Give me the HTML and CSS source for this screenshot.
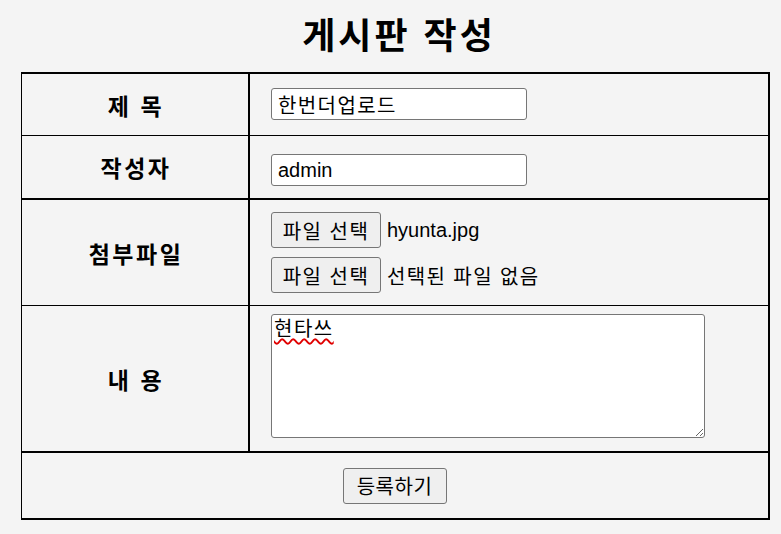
FILE: index.html
```html
<!DOCTYPE html>
<html lang="ko">
<head>
    <meta charset="UTF-8">
    <meta name="viewport" content="width=device-width, initial-scale=1.0">
    <title>게시판 작성</title>
    <link rel="stylesheet" href="styles.css">
</head>
<body>

    <h1 class="title">게시판 작성</h1>

    <form class="board-form" onsubmit="return false;">
        <div class="cell label row1">제 목</div>
        <div class="cell value row1">
            <input type="text" class="text-input ko" value="한번더업로드">
        </div>

        <div class="cell label row2">작성자</div>
        <div class="cell value row2">
            <input type="text" class="text-input" value="admin">
        </div>

        <div class="cell label row3">첨부파일</div>
        <div class="cell value row3 files">
            <div class="file-line">
                <button type="button" class="btn file-btn">파일 선택</button>
                <span class="file-name">hyunta.jpg</span>
            </div>
            <div class="file-line">
                <button type="button" class="btn file-btn">파일 선택</button>
                <span class="file-name ko">선택된 파일 없음</span>
            </div>
        </div>

        <div class="cell label row4">내 용</div>
        <div class="cell value row4">
            <div class="content-box" contenteditable="true"><span class="typo">현타쓰</span></div>
        </div>

        <div class="cell submit-row">
            <button type="submit" class="btn submit-btn">등록하기</button>
        </div>
    </form>

</body>
</html>
```

FILE: styles.css
```css
body {
    margin: 0;
    background-color: #f4f4f4;
    font-family: "Liberation Sans", "Noto Sans CJK KR", sans-serif;
    color: #000;
}

.title {
    margin: 11px 0 17px;
    padding-left: 17px;
    font-family: "Noto Sans CJK KR", sans-serif;
    font-size: 36px;
    font-weight: bold;
    line-height: 44px;
    letter-spacing: 3px;
    text-align: center;
}

.board-form {
    display: grid;
    grid-template-columns: 228px 518px;
    grid-template-rows: 62px 64px 106px 147px 65px;
    width: 749px;
    margin-left: 21px;
    box-sizing: border-box;
    border-top: 2px solid #000;
    border-left: 1px solid #000;
    border-right: 2px solid #000;
    border-bottom: 2px solid #000;
}

.cell {
    box-sizing: border-box;
}

.label {
    display: flex;
    align-items: center;
    justify-content: center;
    border-right: 2px solid #000;
    font-family: "Noto Sans CJK KR", sans-serif;
    font-size: 23px;
    font-weight: bold;
    letter-spacing: 2.5px;
    padding-left: 2px;
}

.value {
    padding-left: 21px;
}

.row1 {
    border-bottom: 1px solid #000;
}

.row1.value {
    padding-top: 14px;
}

.row2 {
    border-bottom: 2px solid #000;
}

.row2.value {
    padding-top: 18px;
}

.row3 {
    border-bottom: 1px solid #000;
}

.row4 {
    border-bottom: 2px solid #000;
}

.row4.value {
    padding-top: 8px;
}

.text-input {
    display: block;
    box-sizing: border-box;
    width: 256px;
    height: 32px;
    margin: 0;
    padding: 0 6px;
    border: 1px solid #767676;
    border-radius: 3px;
    background-color: #fff;
    font-family: "Liberation Sans", "Noto Sans CJK KR", sans-serif;
    font-size: 20px;
    color: #000;
}

.ko {
    letter-spacing: 1.4px;
}

.files {
    display: flex;
    flex-direction: column;
    gap: 9px;
    padding-top: 12px;
}

.file-line {
    display: flex;
    align-items: center;
    gap: 6px;
    font-size: 20px;
}

.btn {
    box-sizing: border-box;
    height: 36px;
    margin: 0;
    padding: 0;
    border: 1px solid #767676;
    border-radius: 3px;
    background-color: #efefef;
    font-family: "Liberation Sans", "Noto Sans CJK KR", sans-serif;
    font-size: 20px;
    color: #000;
}

.file-btn {
    width: 110px;
    letter-spacing: 1.5px;
}

.content-box {
    box-sizing: border-box;
    width: 434px;
    height: 124px;
    padding: 2px 2px;
    border: 1px solid #767676;
    border-radius: 3px;
    background-color: #fff;
    font-family: "Liberation Sans", "Noto Sans CJK KR", sans-serif;
    font-size: 20px;
    line-height: 24px;
    letter-spacing: 1.5px;
    overflow: auto;
    resize: both;
    outline: none;
}

.typo {
    text-decoration: underline wavy #e00000;
    text-decoration-thickness: 1.5px;
    text-underline-offset: 2px;
}

.submit-row {
    grid-column: 1 / 3;
    display: flex;
    align-items: center;
    justify-content: center;
    padding-right: 1px;
}

.submit-btn {
    width: 104px;
    letter-spacing: 0.5px;
}
```
